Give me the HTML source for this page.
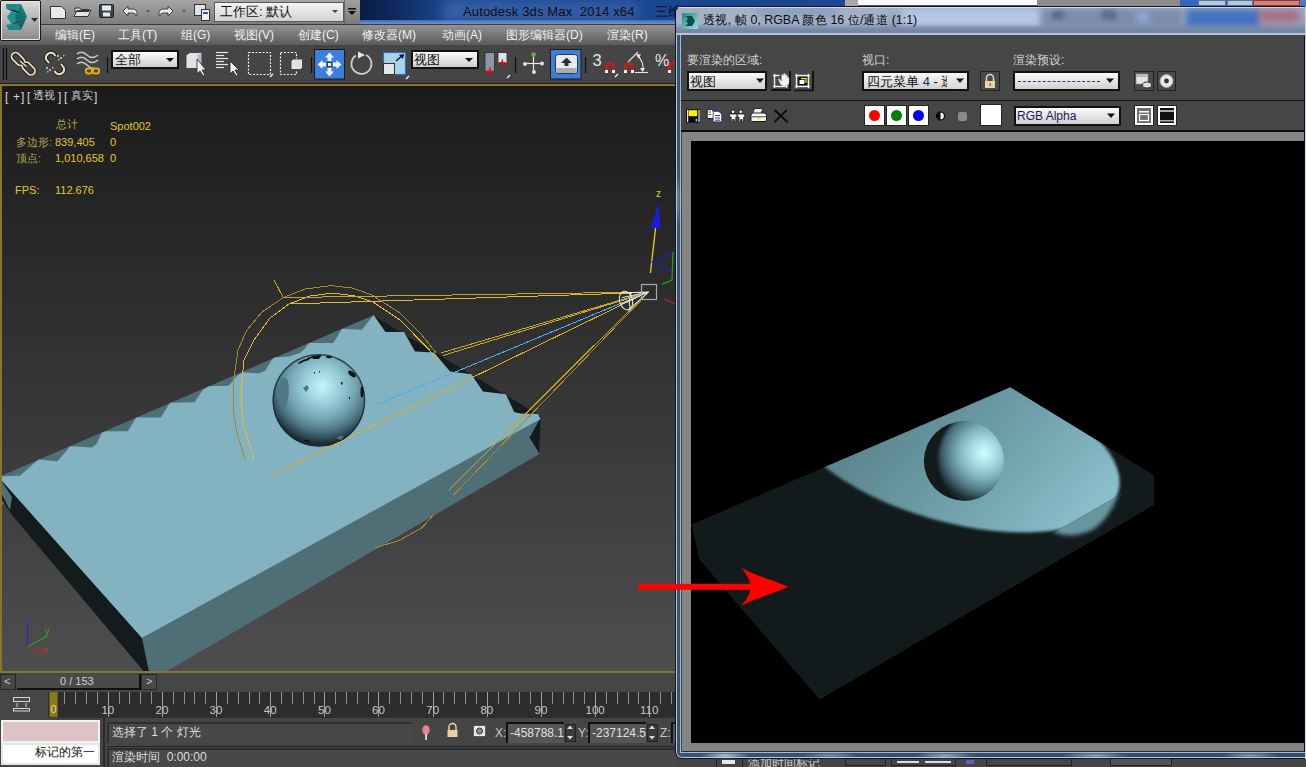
<!DOCTYPE html>
<html><head><meta charset="utf-8">
<style>
*{margin:0;padding:0;box-sizing:border-box}
html,body{width:1306px;height:767px;overflow:hidden;background:#444;font-family:"Liberation Sans",sans-serif}
.a{position:absolute}
.t{position:absolute;white-space:nowrap;line-height:1}
.c{display:inline-block;width:1em;overflow:hidden;vertical-align:top}
</style></head><body>
<!-- ===== MAIN WINDOW ===== -->
<!-- top bar -->
<div class="a" style="left:0;top:0;width:1306px;height:24px;background:linear-gradient(#a6a6a6,#7d7d7d)"></div>
<!-- title blue -->
<div class="a" style="left:360px;top:0;width:946px;height:24px;background:linear-gradient(90deg,#0a1c44 0%,#0f2a60 4%,#1f4c98 10%,#1a448e 40%,#1d4a96 60%,#2a5cb0 80%,#4a7ac0 100%)"></div>
<div class="a" style="left:360px;top:20px;width:946px;height:4px;background:linear-gradient(#3d6ab8,#6d93cc)"></div>
<!-- menu bar -->
<div class="a" style="left:0;top:24px;width:1306px;height:1px;background:#3a3a3a"></div>
<div class="a" style="left:0;top:25px;width:1306px;height:20px;background:linear-gradient(#939393,#5b5b5b)"></div>
<!-- toolbar -->
<div class="a" style="left:0;top:45px;width:1306px;height:38px;background:#454545"></div>
<div class="a" style="left:0;top:83px;width:1306px;height:1px;background:#1e1e1e"></div>

<!-- logo button -->
<div class="a" style="left:0;top:0;width:41px;height:41px;border:1px solid #1a1a1a;border-radius:2px;background:linear-gradient(#dadada,#8a8a8a);box-shadow:inset 0 0 0 1px #e8e8e8"></div>
<svg class="a" style="left:0;top:0" width="41" height="41">
<polygon points="6,4 21,4 17,10.5 6,8.5" fill="#1a8b89"/>
<polygon points="21,4 27,16.5 17,10.5" fill="#147a78"/>
<polygon points="6,8.5 17,10.5 27,16.5 11.5,11" fill="#0b3f3e"/>
<polygon points="11.5,11 27,16.5 11.5,24 7,17" fill="#1b9391"/>
<polygon points="15.5,13 27,16.5 15.5,21.5" fill="#10706e"/>
<polygon points="11.5,24 27,16.5 17,23.5 6,25" fill="#0b3f3e"/>
<polygon points="27,16.5 21,30 17,23.5" fill="#0f6765"/>
<polygon points="6,25 17,23.5 21,30 8.5,30" fill="#198785"/>
<polygon points="31,18 38,18 34.5,22" fill="#2b2f3a"/>
</svg>
<!-- quick access icons -->
<svg class="a" style="left:42px;top:0" width="170" height="24">
<path d="M8.5,6.5 h11 l4,4 v8 h-15 z" fill="#e8eaee" stroke="#333" stroke-width="1"/>
<path d="M33,8 h5 l1,1.5 h8 v2 h-14z M32,16.5 l3,-6 h14 l-3,6z" fill="#dfe3ea" stroke="#333" stroke-width="1"/>
<rect x="57.5" y="4.5" width="14" height="13" rx="1" fill="#3a4450" stroke="#222"/>
<rect x="60" y="5.5" width="9" height="5" fill="#e8e8e8"/><rect x="61" y="12.5" width="7" height="4" fill="#e8e8e8"/>
<path d="M81,11 l5,-5 v3 h4 c4,0 5,2 5,4 c0,2 -1,3 -1,3 c0,-2 -1,-3 -4,-3 h-4 v3z" fill="#e8e8e8" stroke="#333" stroke-width="0.9"/>
<polygon points="104,10 108,10 106,12.5" fill="#555"/>
<path d="M131,11 l-5,-5 v3 h-4 c-4,0 -5,2 -5,4 c0,2 1,3 1,3 c0,-2 1,-3 4,-3 h4 v3z" fill="#e8e8e8" stroke="#333" stroke-width="0.9"/>
<polygon points="140,10 144,10 142,12.5" fill="#555"/>
<rect x="152.5" y="4.5" width="11" height="11" fill="#e0e4ea" stroke="#333"/>
<rect x="159.5" y="9.5" width="8" height="11" fill="#f0f0f0" stroke="#333"/>
<rect x="161" y="12" width="5" height="2" fill="#2a5cc0"/>
</svg>
<!-- workspace dropdown -->
<div class="a" style="left:214px;top:2px;width:130px;height:20px;border:1px solid #5a5a5a;background:linear-gradient(#f4f4f4,#d2d2d2)"></div>
<div class="t" style="left:220px;top:5px;font-size:13px;color:#111"><span class="c">工</span><span class="c">作</span><span class="c">区</span>: <span class="c">默</span><span class="c">认</span></div>
<svg class="a" style="left:330px;top:9px" width="10" height="6"><polygon points="2,1 8,1 5,4" fill="#444"/></svg>
<div class="a" style="left:344px;top:0px;width:16px;height:24px;background:linear-gradient(#a0a0a0,#7a7a7a);border-left:1px solid #666"></div>
<svg class="a" style="left:345px;top:5px" width="14" height="14"><rect x="3" y="3" width="8" height="1.5" fill="#111"/><polygon points="3,6 11,6 7,10" fill="#111"/></svg>
<!-- title -->
<div class="a" style="left:440px;top:1px;width:200px;height:20px;border-radius:10px;background:rgba(150,180,230,0.18);filter:blur(4px)"></div>
<div class="t" style="left:463px;top:5px;font-size:13px;color:#0d0d14;letter-spacing:0.15px">Autodesk 3ds Max&nbsp; 2014 x64</div>
<div class="t" style="left:655px;top:5px;font-size:13px;color:#0d0d14"><span class="c">三</span><span class="c">维</span></div>
<!-- top strip right (behind render window) -->
<div class="a" style="left:845px;top:0;width:13px;height:6px;background:#a9a9a9"></div>
<div class="a" style="left:858px;top:0;width:179px;height:6px;background:#f8f8f8;border-bottom:1px solid #555"></div>
<div class="a" style="left:1037px;top:0;width:143px;height:6px;background:#8c8c8c"></div>
<div class="a" style="left:1198px;top:0;width:28px;height:6px;background:#b7c8e0;border:1px solid #5870a0"></div>
<div class="a" style="left:1227px;top:0;width:26px;height:6px;background:#b7c8e0;border:1px solid #5870a0"></div>
<div class="a" style="left:1253px;top:0;width:47px;height:6px;background:#d88080;border:1px solid #804040"></div>
<!-- menu -->
<div class="t" style="left:55px;top:29px;font-size:12px;color:#f0f0f0"><span class="c">编</span><span class="c">辑</span>(E)</div>
<div class="t" style="left:118px;top:29px;font-size:12px;color:#f0f0f0"><span class="c">工</span><span class="c">具</span>(T)</div>
<div class="t" style="left:181px;top:29px;font-size:12px;color:#f0f0f0"><span class="c">组</span>(G)</div>
<div class="t" style="left:234px;top:29px;font-size:12px;color:#f0f0f0"><span class="c">视</span><span class="c">图</span>(V)</div>
<div class="t" style="left:298px;top:29px;font-size:12px;color:#f0f0f0"><span class="c">创</span><span class="c">建</span>(C)</div>
<div class="t" style="left:362px;top:29px;font-size:12px;color:#f0f0f0"><span class="c">修</span><span class="c">改</span><span class="c">器</span>(M)</div>
<div class="t" style="left:442px;top:29px;font-size:12px;color:#f0f0f0"><span class="c">动</span><span class="c">画</span>(A)</div>
<div class="t" style="left:506px;top:29px;font-size:12px;color:#f0f0f0"><span class="c">图</span><span class="c">形</span><span class="c">编</span><span class="c">辑</span><span class="c">器</span>(D)</div>
<div class="t" style="left:607px;top:29px;font-size:12px;color:#f0f0f0"><span class="c">渲</span><span class="c">染</span>(R)</div>


<!-- toolbar icons -->
<svg class="a" style="left:0;top:45px" width="675" height="38" viewBox="0 45 675 38">
<line x1="3.5" y1="48" x2="3.5" y2="80" stroke="#0a0a0a" stroke-width="1.2"/>
<line x1="6.5" y1="48" x2="6.5" y2="80" stroke="#0a0a0a" stroke-width="1.2"/>
<!-- link -->
<g fill="none" stroke="#1c2230" stroke-width="3.6"><rect x="14" y="51.5" width="8" height="15" rx="4" transform="rotate(-45 18 59)"/><rect x="24.6" y="61" width="8" height="15" rx="4" transform="rotate(-45 28.6 68.5)"/></g>
<g fill="none" stroke="#f2deb0" stroke-width="1.8"><rect x="14" y="51.5" width="8" height="15" rx="4" transform="rotate(-45 18 59)"/><rect x="24.6" y="61" width="8" height="15" rx="4" transform="rotate(-45 28.6 68.5)"/></g>
<line x1="20" y1="61" x2="26.5" y2="66.5" stroke="#1c2230" stroke-width="3.4"/><line x1="20" y1="61" x2="26.5" y2="66.5" stroke="#f2deb0" stroke-width="1.6"/>
<!-- unlink -->
<g fill="none" stroke="#1c2230" stroke-width="4"><path d="M49,63 l-3,-4 a5,5 0 0 1 8,-5 l1.5,2"/><path d="M61,64 l3,4 a5,5 0 0 1 -8,5 l-1.5,-2"/></g>
<g fill="none" stroke="#f2deb0" stroke-width="2"><path d="M49,63 l-3,-4 a5,5 0 0 1 8,-5 l1.5,2"/><path d="M61,64 l3,4 a5,5 0 0 1 -8,5 l-1.5,-2"/></g>
<g fill="#b8b8b8"><rect x="57" y="55" width="2" height="2"/><rect x="60" y="57" width="2" height="2"/><rect x="63" y="55" width="1.5" height="1.5"/><rect x="58" y="59" width="1.5" height="1.5"/><rect x="46" y="67" width="2" height="2"/><rect x="49" y="69" width="2" height="2"/><rect x="52" y="67" width="1.5" height="1.5"/><rect x="47" y="71" width="1.5" height="1.5"/></g>
<!-- waves + chain -->
<g fill="none" stroke="#c8c8c8" stroke-width="1.6"><path d="M77,54 q5,-4 10,1 q5,5 11,0"/><path d="M77,59 q5,-4 10,1 q5,5 11,0"/><path d="M77,64 q5,-4 10,1 q4,4 7,3"/></g>
<g fill="none" stroke="#e0b010" stroke-width="2"><rect x="86" y="68.5" width="6" height="5" rx="2"/><rect x="93" y="68.5" width="6" height="5" rx="2"/></g>
<line x1="107.5" y1="57" x2="107.5" y2="73" stroke="#111" stroke-width="1.2"/>
<!-- select object -->
<polygon points="186,55 190,52.5 201.5,52.5 201.5,66 197.5,68.5 186,68.5" fill="#dfe2e8" stroke="#333" stroke-width="0.8"/>
<polygon points="197.5,55.5 201.5,52.5 201.5,66 197.5,68.5" fill="#b5bac2"/>
<path d="M197,59 l0,15 l3,-3 l3,5 l2,-1 l-3,-5 l4,0 z" fill="#eee" stroke="#222" stroke-width="0.8"/>
<!-- select by name -->
<g stroke="#e6e6e6" stroke-width="1.2"><line x1="216" y1="52.5" x2="228" y2="52.5"/><line x1="216" y1="55.5" x2="224" y2="55.5"/><line x1="216" y1="58.5" x2="228" y2="58.5"/><line x1="216" y1="61.5" x2="224" y2="61.5"/><line x1="216" y1="64.5" x2="228" y2="64.5"/><line x1="216" y1="67.5" x2="224" y2="67.5"/></g>
<path d="M230,61 l0,13 l3,-3 l3,5 l2,-1 l-3,-5 l4,0 z" fill="#eee" stroke="#222" stroke-width="0.8"/>
<!-- rect select -->
<rect x="248.5" y="52.5" width="22" height="22" fill="none" stroke="#f0f0f0" stroke-width="1.2" stroke-dasharray="2,1.5"/>
<line x1="270" y1="77" x2="273" y2="74" stroke="#fff" stroke-width="1.2"/>
<!-- window crossing -->
<rect x="280.5" y="52.5" width="16" height="22" fill="none" stroke="#f0f0f0" stroke-width="1.2" stroke-dasharray="2,1.5"/>
<polygon points="291,61 293,59 302.5,59 302.5,67.5 300.5,69.5 291,69.5" fill="#dfe2e8" stroke="#333" stroke-width="0.8"/>
<line x1="311.5" y1="57" x2="311.5" y2="73" stroke="#111" stroke-width="1.2"/>
<!-- move -->
<rect x="314.5" y="49.5" width="30" height="29.5" fill="#3b7fdc" stroke="#1a1a1a" stroke-width="1"/>
<g fill="#f0f0f0"><polygon points="329.5,52.5 325,57.5 327.5,57.5 327.5,61 331.5,61 331.5,57.5 334,57.5"/><polygon points="329.5,76.5 325,71.5 327.5,71.5 327.5,68 331.5,68 331.5,71.5 334,71.5"/><polygon points="317.5,64.5 322.5,60 322.5,62.5 326,62.5 326,66.5 322.5,66.5 322.5,69"/><polygon points="341.5,64.5 336.5,60 336.5,62.5 333,62.5 333,66.5 336.5,66.5 336.5,69"/></g>
<rect x="327.5" y="62.5" width="4" height="4" fill="#f0f0f0" stroke="#222" stroke-width="0.8"/>
<!-- rotate -->
<path d="M356,55.5 A10,10 0 1 0 366,55" fill="none" stroke="#d0d0d0" stroke-width="1.8"/>
<polygon points="358,51.5 365,55 358,58.5" fill="#e8e8e8"/>
<!-- scale -->
<rect x="383.5" y="52.5" width="22" height="22" fill="#a9d3ec" stroke="#2a6fc8" stroke-width="1.2"/>
<rect x="383.5" y="63.5" width="11" height="11" fill="#e4e6ea" stroke="#333" stroke-width="1"/>
<line x1="396" y1="61" x2="403" y2="55" stroke="#111" stroke-width="1.4"/><polygon points="404,54 399,55 403,59" fill="#111"/>
<line x1="406" y1="79" x2="409" y2="76" stroke="#fff" stroke-width="1.2"/>
<!-- pivot -->
<rect x="485" y="52.5" width="9.5" height="19" fill="#8c96a4" stroke="#2a2a2a" stroke-width="0.8"/>
<rect x="498" y="52.5" width="9" height="11" fill="#e0e2e6" stroke="#2a2a2a" stroke-width="0.8"/>
<g fill="#e01010"><rect x="489" y="67.5" width="1.6" height="8"/><rect x="486" y="70.5" width="8" height="1.6"/><rect x="501.5" y="59.5" width="1.6" height="7"/><rect x="499" y="62" width="7" height="1.6"/></g>
<line x1="507" y1="78" x2="510" y2="75" stroke="#fff" stroke-width="1.2"/>
<line x1="515.5" y1="57" x2="515.5" y2="73" stroke="#111" stroke-width="1.2"/>
<!-- manipulate -->
<g stroke="#e8e8e8" stroke-width="1.2"><line x1="525" y1="63.5" x2="542" y2="63.5"/><line x1="533.5" y1="55" x2="533.5" y2="72"/></g>
<circle cx="533.5" cy="54.5" r="2.3" fill="#5ab040"/><circle cx="525" cy="64" r="2" fill="#ddd"/><circle cx="542" cy="63.5" r="2" fill="#ddd"/><circle cx="534" cy="72" r="2" fill="#ddd"/>
<!-- keyboard override -->
<rect x="550.5" y="49.5" width="30.5" height="29.5" fill="#3b7fdc" stroke="#1a1a1a" stroke-width="1"/>
<rect x="555.5" y="54.5" width="22" height="19" rx="3" fill="#e8eaee" stroke="#333" stroke-width="1"/>
<rect x="556" y="68" width="21" height="5" rx="2" fill="#a8aeb8"/>
<polygon points="566.5,57.5 561,63 564.5,63 564.5,66 568.5,66 568.5,63 572,63" fill="#2a3038"/>
<line x1="585.5" y1="57" x2="585.5" y2="73" stroke="#111" stroke-width="1.2"/>
<!-- snaps -->
<text x="592.5" y="65.5" font-family="Liberation Sans" font-size="16.5" fill="#e6e6e6">3</text>
<g fill="none" stroke="#d01818" stroke-width="2.6"><path d="M606.5,72 v-5 a3.5,3.5 0 0 1 7,0 v5"/><path d="M625.5,72 v-5 a3.5,3.5 0 0 1 7,0 v5"/><path d="M669.5,72 v-5 a3.5,3.5 0 0 1 7,0 v5"/></g>
<g fill="#f0f0f0"><rect x="605" y="70" width="3" height="3"/><rect x="612" y="70" width="3" height="3"/><rect x="624" y="70" width="3" height="3"/><rect x="631" y="70" width="3" height="3"/><rect x="668" y="70" width="3" height="3"/></g>
<line x1="615" y1="77" x2="618" y2="74" stroke="#fff" stroke-width="1.2"/>
<g fill="none" stroke="#e6e6e6" stroke-width="1.1"><line x1="628" y1="62" x2="638" y2="52"/><path d="M637.5,55.5 q6.5,6 5.5,15.5"/><line x1="635" y1="72.5" x2="648" y2="72.5"/></g><g fill="#e6e6e6"><polygon points="636,54 641,54.5 638.5,58.5"/><polygon points="640,68 645,68 642.5,72"/></g>
<text x="655" y="65.5" font-family="Liberation Sans" font-size="16" fill="#e6e6e6">%</text>
</svg>
<!-- toolbar dropdowns -->
<div class="a" style="left:111px;top:50px;width:68px;height:19px;border:2px solid #111;background:linear-gradient(#fafafa,#cfcfcf)"></div>
<div class="t" style="left:115px;top:53px;font-size:13px;color:#111"><span class="c">全</span><span class="c">部</span></div>
<svg class="a" style="left:165px;top:57px" width="10" height="6"><polygon points="1,1 9,1 5,5" fill="#111"/></svg>
<div class="a" style="left:411px;top:50px;width:68px;height:19px;border:2px solid #111;background:linear-gradient(#fafafa,#cfcfcf)"></div>
<div class="t" style="left:414px;top:53px;font-size:13px;color:#111"><span class="c">视</span><span class="c">图</span></div>
<svg class="a" style="left:464px;top:57px" width="10" height="6"><polygon points="1,1 9,1 5,5" fill="#111"/></svg>

<!-- viewport -->
<div class="a" style="left:0;top:84px;width:680px;height:589px;background:#8a7530"></div>
<div class="a" style="left:2px;top:86px;width:676px;height:585px;background:linear-gradient(#1b1b1b,#4e4e4e)"></div>

<!-- viewport scene -->
<svg class="a" style="left:0;top:0" width="675" height="767" viewBox="0 0 675 767">
<defs>
<clipPath id="vpc"><rect x="2" y="86" width="673" height="585"/></clipPath>
<radialGradient id="sph" cx="322" cy="386" r="58" gradientUnits="userSpaceOnUse">
<stop offset="0" stop-color="#c4f6fc"/><stop offset="0.3" stop-color="#9ad0dc"/><stop offset="0.58" stop-color="#72a4b1"/><stop offset="0.78" stop-color="#4d7582"/><stop offset="0.92" stop-color="#2c4650"/><stop offset="1" stop-color="#1a2a30"/>
</radialGradient>
</defs>
<g clip-path="url(#vpc)">
<!-- teal band under back line -->
<polygon fill="#4f6f78" points="2,475.5 374,315 374,345 2,505"/>
<!-- dark back wall -->
<polygon fill="#141c1f" points="374,316 540.5,416 540.5,430 374,340"/>
<!-- left side face -->
<polygon fill="#141b1d" points="2,478 142,638 149,671 143.5,671 11.7,514.7 2,500"/>
<polygon fill="#4f6f78" points="2,482 12,497 10,510 2,495"/>
<!-- front face -->
<polygon fill="#4f6e76" points="142,638 540.5,418 539.5,454 167,671 149,671"/>
<polygon fill="#141b1d" points="540.5,418 529.5,437.5 539.5,454"/>
<!-- top face -->
<polygon fill="#83b2c1" points="2,481 2,476.2 19.9,475.7 33.7,463.5 39,459.6 57.4,461.2 67.4,449.7 69.7,446.2 91.9,447.4 96.5,444.3 101.8,432.8 106.4,431.3 127.9,431.3 136.3,417.5 160.8,417.5 170,402.7 194.5,402.2 202.9,389.8 208.8,386.3 228.7,385.7 237,375.7 242.8,372.2 258,373.4 265,371 272.2,359.3 274.5,357.5 288.6,356.4 300,353 304.7,348.7 309,343 333.4,343 342,328.7 361.9,329.7 373.6,315 385.4,332 404,332 415,351.6 434,352.4 450,371.4 471.5,374.2 476.5,381.9 483,391.5 505.8,394.2 512.1,407.5 514,412 520.4,413.4 538.2,413.9 540.5,419 142,638"/>
<!-- sphere -->
<circle cx="318.9" cy="400.3" r="46.3" fill="url(#sph)"/>
<circle cx="318.9" cy="400.3" r="45.6" fill="none" stroke="#18282e" stroke-width="1.4" opacity="0.8"/>
<g fill="#0a1214">
<path d="M298,363 q5,-4 12,-5 l-1,2 q-5,1 -10,4z"/><path d="M307,358 q7,-3 14,-3 l0,2 q-7,0 -13,2z"/><ellipse cx="316" cy="357.5" rx="4" ry="1.5"/><ellipse cx="329" cy="357" rx="3" ry="1.2"/>
<ellipse cx="352" cy="374" rx="4.5" ry="2.2" transform="rotate(38 352 374)"/><ellipse cx="362" cy="392" rx="1.5" ry="5.5"/>
<rect x="314" y="372" width="1" height="1.5"/><rect x="319" y="371" width="1" height="1.5"/><rect x="341" y="382" width="1.5" height="2.5"/><rect x="304" y="440" width="5" height="1.5"/><rect x="349" y="397" width="1" height="2"/>
</g>
<g fill="#4f7782"><path d="M281,379 q5,-3 7,2 q2,12 -1,22 q-2,4 -3,8 q-3,-6 -4,-14 q-1,-10 1,-18z"/><path d="M303,388 l4,-3 l2,3 l-3,4z"/><path d="M336,438 q4,-3 8,-2 l-3,4z"/><path d="M276,388 q2,-2 3,1 l0,8 q-2,2 -3,-1z"/></g>
<!-- wireframe -->
<g fill="none" stroke="#c8a52a" stroke-width="1" shape-rendering="crispEdges">
<polyline stroke="#a48a2e" points="245.3,459.8 236.4,431.6 233.5,410 233,385 238,350 246.5,330.7 262,312 283.3,297.6 305,289 331,285.6 352,288 371.5,294.8 400,313 421,334 436,352.7"/>
<polyline stroke="#e0bb30" points="254,459.8 242.3,420 241,390 244,360 254,339.9 270,318 288.8,304 310,296 333,293 355,296 373.4,302.2 400,320 423,343.5 441,362"/>
<line x1="274" y1="280" x2="283.3" y2="297.6"/>
<line x1="283.3" y1="297.6" x2="648" y2="292"/>
<line x1="288.8" y1="304" x2="648" y2="292.5" stroke="#e0bb30"/>
<line x1="441" y1="353" x2="648" y2="292"/>
<line x1="443" y1="355.5" x2="648" y2="292.5"/>
<line x1="270.4" y1="475.7" x2="648" y2="292" stroke="#d9b02a"/>
<line x1="449" y1="490" x2="648" y2="292"/>
<line x1="453.6" y1="495" x2="648" y2="293" stroke="#a88a2a"/>
<polyline points="375,548 400,540 421.8,527.9 432.5,516" stroke="#a88a2a"/>
</g>
<line x1="375" y1="405.3" x2="648" y2="292" stroke="#4aaef0" stroke-width="1" shape-rendering="crispEdges"/>
<!-- spot light cone -->
<g fill="none" stroke="#e8e8e8" stroke-width="1">
<ellipse cx="626" cy="300.5" rx="6.5" ry="9.5" transform="rotate(-15 626 300.5)"/>
<line x1="620.5" y1="293" x2="648.5" y2="292"/><line x1="627.7" y1="310.4" x2="648.5" y2="292"/><line x1="621.3" y1="304" x2="648.5" y2="292"/><line x1="622" y1="297.6" x2="648.5" y2="292"/>
<path d="M631,292.5 q-3,8 -1,17"/>
</g>
<rect x="641.5" y="284.5" width="15" height="15" fill="none" stroke="#a8a8a8" stroke-width="1.2"/>
<!-- gizmo -->
<line x1="655.6" y1="228" x2="650.4" y2="273" stroke="#e6d020" stroke-width="1.3"/>
<polygon points="658.2,203 651,228 660.5,228" fill="#1a1ae6"/>
<text x="656" y="197" font-family="Liberation Sans" font-size="10" fill="#e6d020">z</text>
<polyline points="673,252.5 652,262 673,272.3" fill="none" stroke="#2020c0" stroke-width="1.2"/>
<polyline points="673,252 672,280 662,284.4" fill="none" stroke="#20a020" stroke-width="1.2"/>
<line x1="664" y1="299" x2="675" y2="304" stroke="#c02020" stroke-width="1.2"/>
<!-- axis tripod -->
<line x1="27.5" y1="624" x2="27.5" y2="647" stroke="#2828c8" stroke-width="1.2"/>
<line x1="27.5" y1="647" x2="47" y2="636" stroke="#28a028" stroke-width="1.2"/>
<line x1="27.5" y1="647" x2="45" y2="654.5" stroke="#c02828" stroke-width="1.2"/>
<text x="25.5" y="622" font-family="Liberation Sans" font-size="9" fill="#3a3ad8">z</text>
<text x="45" y="634" font-family="Liberation Sans" font-size="9" fill="#30b030">y</text>
<text x="43" y="653" font-family="Liberation Sans" font-size="9" fill="#d03030">x</text>
</g>
</svg>


<!-- viewport texts -->
<div class="t" style="left:5px;top:91px;font-size:12px;color:#d6d6d6">[</div><div class="t" style="left:13px;top:91px;font-size:12px;color:#d6d6d6">+</div><div class="t" style="left:21px;top:91px;font-size:12px;color:#d6d6d6">]</div>
<div class="t" style="left:27px;top:91px;font-size:12px;color:#d6d6d6">[</div><div class="t" style="left:33px;top:90px;font-size:11px;color:#c8c8c8"><span class="c">透</span><span class="c">视</span></div><div class="t" style="left:58px;top:91px;font-size:12px;color:#d6d6d6">]</div>
<div class="t" style="left:64px;top:91px;font-size:12px;color:#d6d6d6">[</div><div class="t" style="left:71px;top:90px;font-size:11px;color:#c8c8c8"><span class="c">真</span><span class="c">实</span></div><div class="t" style="left:94px;top:91px;font-size:12px;color:#d6d6d6">]</div>
<div class="t" style="left:56px;top:119px;font-size:11px;color:#b4a44a"><span class="c">总</span><span class="c">计</span></div>
<div class="t" style="left:110px;top:121px;font-size:11px;color:#e4c62a">Spot002</div>
<div class="t" style="left:16px;top:137px;font-size:11px;color:#b4a44a"><span class="c">多</span><span class="c">边</span><span class="c">形</span>:</div>
<div class="t" style="left:55px;top:137px;font-size:11px;color:#e4c62a">839,405</div>
<div class="t" style="left:110px;top:137px;font-size:11px;color:#e4c62a">0</div>
<div class="t" style="left:16px;top:153px;font-size:11px;color:#b4a44a"><span class="c">顶</span><span class="c">点</span>:</div>
<div class="t" style="left:55px;top:153px;font-size:11px;color:#e4c62a">1,010,658</div>
<div class="t" style="left:110px;top:153px;font-size:11px;color:#e4c62a">0</div>
<div class="t" style="left:15px;top:185px;font-size:11px;color:#e4c62a">FPS:</div>
<div class="t" style="left:55px;top:185px;font-size:11px;color:#e4c62a">112.676</div>

<!-- time slider / track / status -->
<div class="a" style="left:0;top:673px;width:1306px;height:94px;background:#454545"></div>
<div class="a" style="left:0;top:673px;width:675px;height:19px;background:#464646"></div>
<div class="a" style="left:0;top:674px;width:16px;height:16px;border:1px solid #2a2a2a;border-right-color:#222;background:#484848"></div>
<div class="t" style="left:4px;top:676px;font-size:11px;color:#c8c8c8">&lt;</div>
<div class="a" style="left:17px;top:674px;width:124px;height:16px;background:#4a4a4a;border-bottom:2px solid #111;border-right:2px solid #111"></div>
<div class="t" style="left:60px;top:676px;font-size:11px;color:#d0d0d0">0 / 153</div>
<div class="a" style="left:141px;top:674px;width:16px;height:16px;border:1px solid #2a2a2a;background:#484848"></div>
<div class="t" style="left:146px;top:676px;font-size:11px;color:#c8c8c8">&gt;</div>
<div class="a" style="left:0;top:692px;width:48px;height:26px;background:#474747"></div>
<div class="a" style="left:48px;top:692px;width:627px;height:26px;background:#2d2d2d"></div>
<!-- status bar -->
<div class="a" style="left:0;top:718px;width:675px;height:49px;background:#454545"></div>
<div class="a" style="left:1px;top:720px;width:99px;height:23px;background:#dcc4c4;border:2px solid #f2f2f2"></div>
<div class="a" style="left:1px;top:743px;width:99px;height:22px;background:#fff;border:2px solid #e6e6e6"></div>
<div class="t" style="left:35px;top:746px;font-size:12px;color:#111"><span class="c">标</span><span class="c">记</span><span class="c">的</span><span class="c">第</span><span class="c">一</span></div>
<div class="a" style="left:103px;top:718px;width:2px;height:49px;background:#2a2a2a"></div>
<div class="a" style="left:107px;top:722px;width:305px;height:21px;background:#484848;border-top:2px solid #2e2e2e;border-left:2px solid #2e2e2e"></div>
<div class="t" style="left:112px;top:726px;font-size:12px;color:#dedede"><span class="c">选</span><span class="c">择</span><span class="c">了</span> 1 <span class="c">个</span> <span class="c">灯</span><span class="c">光</span></div>
<div class="a" style="left:107px;top:746px;width:568px;height:1px;background:#262626"></div>
<div class="a" style="left:107px;top:748px;width:568px;height:19px;background:#484848;border-top:2px solid #2e2e2e;border-left:2px solid #2e2e2e"></div>
<div class="t" style="left:112px;top:751px;font-size:12px;color:#dedede"><span class="c">渲</span><span class="c">染</span><span class="c">时</span><span class="c">间</span>&nbsp; 0:00:00</div>
<div class="t" style="left:495px;top:727px;font-size:12px;color:#c8c8c8">X:</div>
<div class="a" style="left:506px;top:722px;width:58px;height:21px;background:#555;border-top:2px solid #111;border-left:2px solid #111;overflow:hidden"><div class="t" style="left:2px;top:3px;font-size:12px;color:#e0e0e0">-458788.1</div></div>
<div class="a" style="left:565px;top:724px;width:11px;height:18px;background:#3a3a3a;border:1px solid #222"></div>
<div class="t" style="left:578px;top:727px;font-size:12px;color:#c8c8c8">Y:</div>
<div class="a" style="left:588px;top:722px;width:58px;height:21px;background:#555;border-top:2px solid #111;border-left:2px solid #111;overflow:hidden"><div class="t" style="left:2px;top:3px;font-size:12px;color:#e0e0e0">-237124.5</div></div>
<div class="a" style="left:647px;top:724px;width:11px;height:18px;background:#3a3a3a;border:1px solid #222"></div>
<div class="t" style="left:660px;top:727px;font-size:12px;color:#c8c8c8">Z:</div>
<div class="a" style="left:671px;top:722px;width:10px;height:21px;background:#555;border-top:2px solid #111;border-left:2px solid #111"></div>
<svg class="a" style="left:0;top:0" width="675" height="767" viewBox="0 0 675 767">
<line x1="54.5" y1="692" x2="54.5" y2="717" stroke="#a0a0a0" stroke-width="1"/>
<line x1="64.5" y1="692" x2="64.5" y2="704" stroke="#909090" stroke-width="1"/>
<line x1="75.5" y1="692" x2="75.5" y2="704" stroke="#909090" stroke-width="1"/>
<line x1="86.5" y1="692" x2="86.5" y2="704" stroke="#909090" stroke-width="1"/>
<line x1="97.5" y1="692" x2="97.5" y2="704" stroke="#909090" stroke-width="1"/>
<line x1="108.5" y1="692" x2="108.5" y2="717" stroke="#a0a0a0" stroke-width="1"/>
<text x="107.8" y="713.5" text-anchor="middle" font-family="Liberation Sans" font-size="11.5" fill="#c8c8c8">10</text>
<line x1="119.5" y1="692" x2="119.5" y2="704" stroke="#909090" stroke-width="1"/>
<line x1="129.5" y1="692" x2="129.5" y2="704" stroke="#909090" stroke-width="1"/>
<line x1="140.5" y1="692" x2="140.5" y2="704" stroke="#909090" stroke-width="1"/>
<line x1="151.5" y1="692" x2="151.5" y2="704" stroke="#909090" stroke-width="1"/>
<line x1="162.5" y1="692" x2="162.5" y2="717" stroke="#a0a0a0" stroke-width="1"/>
<text x="161.9" y="713.5" text-anchor="middle" font-family="Liberation Sans" font-size="11.5" fill="#c8c8c8">20</text>
<line x1="173.5" y1="692" x2="173.5" y2="704" stroke="#909090" stroke-width="1"/>
<line x1="184.5" y1="692" x2="184.5" y2="704" stroke="#909090" stroke-width="1"/>
<line x1="194.5" y1="692" x2="194.5" y2="704" stroke="#909090" stroke-width="1"/>
<line x1="205.5" y1="692" x2="205.5" y2="704" stroke="#909090" stroke-width="1"/>
<line x1="216.5" y1="692" x2="216.5" y2="717" stroke="#a0a0a0" stroke-width="1"/>
<text x="216.0" y="713.5" text-anchor="middle" font-family="Liberation Sans" font-size="11.5" fill="#c8c8c8">30</text>
<line x1="227.5" y1="692" x2="227.5" y2="704" stroke="#909090" stroke-width="1"/>
<line x1="238.5" y1="692" x2="238.5" y2="704" stroke="#909090" stroke-width="1"/>
<line x1="249.5" y1="692" x2="249.5" y2="704" stroke="#909090" stroke-width="1"/>
<line x1="259.5" y1="692" x2="259.5" y2="704" stroke="#909090" stroke-width="1"/>
<line x1="270.5" y1="692" x2="270.5" y2="717" stroke="#a0a0a0" stroke-width="1"/>
<text x="270.2" y="713.5" text-anchor="middle" font-family="Liberation Sans" font-size="11.5" fill="#c8c8c8">40</text>
<line x1="281.5" y1="692" x2="281.5" y2="704" stroke="#909090" stroke-width="1"/>
<line x1="292.5" y1="692" x2="292.5" y2="704" stroke="#909090" stroke-width="1"/>
<line x1="303.5" y1="692" x2="303.5" y2="704" stroke="#909090" stroke-width="1"/>
<line x1="314.5" y1="692" x2="314.5" y2="704" stroke="#909090" stroke-width="1"/>
<line x1="324.5" y1="692" x2="324.5" y2="717" stroke="#a0a0a0" stroke-width="1"/>
<text x="324.4" y="713.5" text-anchor="middle" font-family="Liberation Sans" font-size="11.5" fill="#c8c8c8">50</text>
<line x1="335.5" y1="692" x2="335.5" y2="704" stroke="#909090" stroke-width="1"/>
<line x1="346.5" y1="692" x2="346.5" y2="704" stroke="#909090" stroke-width="1"/>
<line x1="357.5" y1="692" x2="357.5" y2="704" stroke="#909090" stroke-width="1"/>
<line x1="368.5" y1="692" x2="368.5" y2="704" stroke="#909090" stroke-width="1"/>
<line x1="378.5" y1="692" x2="378.5" y2="717" stroke="#a0a0a0" stroke-width="1"/>
<text x="378.5" y="713.5" text-anchor="middle" font-family="Liberation Sans" font-size="11.5" fill="#c8c8c8">60</text>
<line x1="389.5" y1="692" x2="389.5" y2="704" stroke="#909090" stroke-width="1"/>
<line x1="400.5" y1="692" x2="400.5" y2="704" stroke="#909090" stroke-width="1"/>
<line x1="411.5" y1="692" x2="411.5" y2="704" stroke="#909090" stroke-width="1"/>
<line x1="422.5" y1="692" x2="422.5" y2="704" stroke="#909090" stroke-width="1"/>
<line x1="433.5" y1="692" x2="433.5" y2="717" stroke="#a0a0a0" stroke-width="1"/>
<text x="432.7" y="713.5" text-anchor="middle" font-family="Liberation Sans" font-size="11.5" fill="#c8c8c8">70</text>
<line x1="443.5" y1="692" x2="443.5" y2="704" stroke="#909090" stroke-width="1"/>
<line x1="454.5" y1="692" x2="454.5" y2="704" stroke="#909090" stroke-width="1"/>
<line x1="465.5" y1="692" x2="465.5" y2="704" stroke="#909090" stroke-width="1"/>
<line x1="476.5" y1="692" x2="476.5" y2="704" stroke="#909090" stroke-width="1"/>
<line x1="487.5" y1="692" x2="487.5" y2="717" stroke="#a0a0a0" stroke-width="1"/>
<text x="486.8" y="713.5" text-anchor="middle" font-family="Liberation Sans" font-size="11.5" fill="#c8c8c8">80</text>
<line x1="498.5" y1="692" x2="498.5" y2="704" stroke="#909090" stroke-width="1"/>
<line x1="508.5" y1="692" x2="508.5" y2="704" stroke="#909090" stroke-width="1"/>
<line x1="519.5" y1="692" x2="519.5" y2="704" stroke="#909090" stroke-width="1"/>
<line x1="530.5" y1="692" x2="530.5" y2="704" stroke="#909090" stroke-width="1"/>
<line x1="541.5" y1="692" x2="541.5" y2="717" stroke="#a0a0a0" stroke-width="1"/>
<text x="541.0" y="713.5" text-anchor="middle" font-family="Liberation Sans" font-size="11.5" fill="#c8c8c8">90</text>
<line x1="552.5" y1="692" x2="552.5" y2="704" stroke="#909090" stroke-width="1"/>
<line x1="563.5" y1="692" x2="563.5" y2="704" stroke="#909090" stroke-width="1"/>
<line x1="573.5" y1="692" x2="573.5" y2="704" stroke="#909090" stroke-width="1"/>
<line x1="584.5" y1="692" x2="584.5" y2="704" stroke="#909090" stroke-width="1"/>
<line x1="595.5" y1="692" x2="595.5" y2="717" stroke="#a0a0a0" stroke-width="1"/>
<text x="595.1" y="713.5" text-anchor="middle" font-family="Liberation Sans" font-size="11.5" fill="#c8c8c8">100</text>
<line x1="606.5" y1="692" x2="606.5" y2="704" stroke="#909090" stroke-width="1"/>
<line x1="617.5" y1="692" x2="617.5" y2="704" stroke="#909090" stroke-width="1"/>
<line x1="628.5" y1="692" x2="628.5" y2="704" stroke="#909090" stroke-width="1"/>
<line x1="638.5" y1="692" x2="638.5" y2="704" stroke="#909090" stroke-width="1"/>
<line x1="649.5" y1="692" x2="649.5" y2="717" stroke="#a0a0a0" stroke-width="1"/>
<text x="649.2" y="713.5" text-anchor="middle" font-family="Liberation Sans" font-size="11.5" fill="#c8c8c8">110</text>
<line x1="660.5" y1="692" x2="660.5" y2="704" stroke="#909090" stroke-width="1"/>
<line x1="671.5" y1="692" x2="671.5" y2="704" stroke="#909090" stroke-width="1"/>
<rect x="49.5" y="692" width="8" height="25" fill="#8a7a1c" stroke="#6a5c10" stroke-width="0.8"/>
<text x="53.5" y="713" text-anchor="middle" font-family="Liberation Sans" font-size="11" fill="#e8d890">0</text>
<g fill="none" stroke="#d8d8d8" stroke-width="1"><rect x="13.5" y="697.5" width="16" height="4"/><rect x="13.5" y="708.5" width="16" height="2.5"/><line x1="17" y1="707" x2="17" y2="703"/><line x1="26" y1="703" x2="26" y2="707"/></g>
<!-- status icons -->
<ellipse cx="426" cy="730" rx="4" ry="5" fill="#e08890" stroke="#7a3a40" stroke-width="0.8"/><rect x="425.3" y="734" width="1.6" height="6" fill="#eee"/>
<path d="M449,730 v-3 a3.5,3.5 0 0 1 7,0 v3" fill="none" stroke="#e8d8b8" stroke-width="1.4"/><rect x="447.5" y="730" width="10" height="7" fill="#e8d0a0"/>
<rect x="473.5" y="725.5" width="12" height="11" fill="#e8e8e8" stroke="#333" stroke-width="0.6"/><circle cx="479.5" cy="731" r="3" fill="#888" stroke="#333"/>
<g fill="#d8d8d8"><polygon points="567,729 570,725.5 573,729"/><polygon points="567,736 570,739.5 573,736"/><polygon points="649,729 652,725.5 655,729"/><polygon points="649,736 652,739.5 655,736"/></g>
</svg>



<!-- ===== RENDER WINDOW ===== -->
<!-- bottom strip details (under window) -->
<div class="a" style="left:716px;top:759px;width:1px;height:8px;background:#222"></div>
<div class="a" style="left:722px;top:760px;width:13px;height:4px;background:#e8e8e8"></div>
<div class="a" style="left:742px;top:759px;width:1px;height:8px;background:#222"></div>
<div class="t" style="left:748px;top:757px;font-size:12px;color:#cfcfcf"><span class="c">添</span><span class="c">加</span><span class="c">时</span><span class="c">间</span><span class="c">标</span><span class="c">记</span></div>
<div class="a" style="left:845px;top:757px;width:41px;height:9px;border:1px solid #222;background:#454545"></div>
<div class="a" style="left:891px;top:757px;width:65px;height:9px;border:1px solid #222;background:#454545"></div>
<div class="a" style="left:897px;top:761px;width:22px;height:2px;background:#ddd"></div><div class="a" style="left:925px;top:761px;width:26px;height:2px;background:#ddd"></div>
<div class="a" style="left:966px;top:760px;width:8px;height:4px;background:#6a5ab8"></div>
<div class="a" style="left:986px;top:757px;width:86px;height:9px;border:1px solid #222;background:#454545"></div>
<div class="a" style="left:1110px;top:757px;width:62px;height:9px;border:1px solid #222;background:#555"></div>
<!-- frame -->
<div class="a" style="left:675px;top:6px;width:640px;height:753px;border-radius:7px;background:linear-gradient(90deg,#3a5274,#34496a);border:1px solid #0e1620;box-shadow:inset 0 0 0 1px #b8c8dc"></div>
<!-- glass title -->
<div class="a" style="left:676px;top:7px;width:640px;height:28px;border-radius:6px 6px 0 0;overflow:hidden;background:linear-gradient(#a2b0c6,#98a8c0 50%,#7a8aa8)">
<div class="a" style="left:-10px;top:2px;width:220px;height:18px;background:#a6b2c6;filter:blur(4px)"></div>
<div class="a" style="left:80px;top:0px;width:80px;height:10px;background:#8a9cbc;filter:blur(4px)"></div>
<div class="a" style="left:226px;top:2px;width:138px;height:17px;background:#b4c8e6;filter:blur(3px)"></div>
<div class="a" style="left:366px;top:2px;width:140px;height:18px;background:#7a8cac;filter:blur(3px)"></div>
<div class="a" style="left:376px;top:4px;width:12px;height:8px;background:#5a6a8a;filter:blur(2px)"></div>
<div class="a" style="left:426px;top:3px;width:14px;height:10px;background:#5e6e8c;filter:blur(2px)"></div>
<div class="a" style="left:460px;top:4px;width:14px;height:12px;background:#8ea6d0;filter:blur(3px)"></div>
<div class="a" style="left:510px;top:2px;width:74px;height:18px;background:#4472c0;filter:blur(3px)"></div>
<div class="a" style="left:584px;top:3px;width:40px;height:12px;background:#a8687c;filter:blur(4px)"></div>
<div class="a" style="left:0;top:17px;width:640px;height:11px;background:linear-gradient(rgba(116,132,164,0),rgba(116,132,164,0.95) 60%)"></div>
</div>
<div class="a" style="left:678px;top:7px;width:626px;height:1px;background:rgba(235,242,255,0.7)"></div>
<div class="a" style="left:676px;top:33px;width:640px;height:2px;background:#b7c3d6"></div>
<svg class="a" style="left:682px;top:13px" width="16" height="16">
<defs><linearGradient id="ig" x1="0" y1="0" x2="1" y2="1"><stop offset="0" stop-color="#1a8a88"/><stop offset="1" stop-color="#9ee0d8"/></linearGradient></defs>
<rect width="16" height="16" fill="url(#ig)"/>
<polygon points="3,3 10,3 13,8 10,13 3,13 6,10.5 4,8 6,5.5" fill="#0e4e50"/>
</svg>
<div class="t" style="left:703px;top:14px;font-size:12.4px;color:#0a0a10"><span class="c">透</span><span class="c">视</span>, <span class="c">帧</span> 0, RGBA <span class="c">颜</span><span class="c">色</span> 16 <span class="c">位</span>/<span class="c">通</span><span class="c">道</span> (1:1)</div>
<!-- left frame highlight -->
<div class="a" style="left:680px;top:35px;width:1px;height:718px;background:#a8b8cc"></div>
<div class="a" style="left:680px;top:752px;width:625px;height:1px;background:#a8b8cc"></div>
<!-- panel -->
<div class="a" style="left:681px;top:35px;width:623px;height:717px;background:#464646"></div>
<div class="a" style="left:1304px;top:35px;width:1px;height:717px;background:#111"></div>
<div class="a" style="left:1305px;top:6px;width:1px;height:753px;background:#c8d4e4"></div>
<div class="a" style="left:681px;top:100px;width:623px;height:1px;background:#161616"></div>
<div class="a" style="left:681px;top:130px;width:623px;height:2px;background:#0c0c0c"></div>
<div class="a" style="left:682px;top:132px;width:622px;height:620px;background:#858585"></div>
<div class="a" style="left:691px;top:141px;width:613px;height:602px;background:#000"></div>
<div class="a" style="left:682px;top:751px;width:622px;height:1px;background:#2a2a2a"></div>
<!-- frame glints -->
<div class="a" style="left:700px;top:752px;width:50px;height:7px;background:radial-gradient(ellipse at center,rgba(220,235,255,0.75),rgba(220,235,255,0) 70%)"></div>
<div class="a" style="left:800px;top:752px;width:60px;height:7px;background:radial-gradient(ellipse at center,rgba(200,220,250,0.45),rgba(200,220,250,0) 70%)"></div>
<div class="a" style="left:915px;top:752px;width:60px;height:7px;background:radial-gradient(ellipse at center,rgba(210,225,250,0.6),rgba(210,225,250,0) 70%)"></div>
<div class="a" style="left:1060px;top:752px;width:70px;height:7px;background:radial-gradient(ellipse at center,rgba(210,225,250,0.55),rgba(210,225,250,0) 70%)"></div>
<div class="a" style="left:1220px;top:752px;width:60px;height:7px;background:radial-gradient(ellipse at center,rgba(210,225,250,0.5),rgba(210,225,250,0) 70%)"></div>
<div class="a" style="left:675px;top:170px;width:6px;height:60px;background:radial-gradient(ellipse at center,rgba(200,220,250,0.35),rgba(200,220,250,0) 70%)"></div>
<!-- labels -->
<div class="t" style="left:687px;top:54px;font-size:12px;color:#d2d2d2"><span class="c">要</span><span class="c">渲</span><span class="c">染</span><span class="c">的</span><span class="c">区</span><span class="c">域</span>:</div>
<div class="t" style="left:862px;top:54px;font-size:12px;color:#d2d2d2"><span class="c">视</span><span class="c">口</span>:</div>
<div class="t" style="left:1013px;top:54px;font-size:12px;color:#d2d2d2"><span class="c">渲</span><span class="c">染</span><span class="c">预</span><span class="c">设</span>:</div>
<!-- dropdowns row 1 -->
<div class="a" style="left:687px;top:71px;width:80px;height:20px;border:2px solid #111;background:linear-gradient(#fbfbfb,#d0d0d0)"></div>
<div class="t" style="left:690px;top:75px;font-size:13px;color:#111"><span class="c">视</span><span class="c">图</span></div>
<svg class="a" style="left:755px;top:78px" width="10" height="6"><polygon points="1,0.5 9,0.5 5,5" fill="#111"/></svg>
<div class="a" style="left:771px;top:71px;width:20px;height:20px;border-right:2px solid #111;border-bottom:2px solid #111;background:#474747"></div>
<svg class="a" style="left:765px;top:65px" width="55" height="30" viewBox="765 65 55 30">
<g stroke="#f4f4f4" stroke-width="1.4" fill="none"><line x1="774.5" y1="74.5" x2="774.5" y2="87.5"/><line x1="774.5" y1="75.5" x2="779.5" y2="75.5"/><line x1="774.5" y1="86.5" x2="786.5" y2="86.5"/></g>
<g fill="#f4f4f4"><polygon points="774.5,73.5 776,75.5 774.5,77.5 773,75.5"/><polygon points="786.5,85 788,86.5 786.5,88 785,86.5"/><polygon points="774.5,85 776,86.5 774.5,88 773,86.5"/></g>
<path d="M778,79 q1,-1 2.5,1 l1,1 v-5.5 q0,-1.2 1,-1.2 q1,0 1,1.2 v-1 q0,-1.2 1,-1.2 q1,0 1,1.2 v1.2 q0,-1 1,-1 q1,0 1,1.2 v2 q0,-0.8 0.8,-0.8 q0.8,0 0.8,1 v4 q0,3 -3,4 h-3 q-2,-0.5 -3,-2.5 z" fill="#f2f2f2" stroke="#888" stroke-width="0.4"/>
<rect x="794" y="71" width="19" height="20" fill="#474747"/><line x1="813" y1="71" x2="813" y2="91" stroke="#111" stroke-width="2"/><line x1="794" y1="90.5" x2="813" y2="90.5" stroke="#111" stroke-width="1.5"/>
<g stroke="#f4f4f4" stroke-width="1.4" fill="none"><rect x="796.5" y="75.5" width="12" height="11"/></g>
<g fill="#f4f4f4"><polygon points="796.5,73.5 798,75.5 796.5,77.5 795,75.5"/><polygon points="808.5,73.5 810,75.5 808.5,77.5 807,75.5"/><polygon points="796.5,84.5 798,86.5 796.5,88.5 795,86.5"/><polygon points="808.5,84.5 810,86.5 808.5,88.5 807,86.5"/></g>
<rect x="798.5" y="77.5" width="8.5" height="7.5" fill="#000"/>
<rect x="799.5" y="80" width="5" height="4" fill="#fff"/>
<polyline points="801,78.6 806,78.6 806,83" fill="none" stroke="#f8f000" stroke-width="1.2"/>
</svg>
<div class="a" style="left:862px;top:71px;width:107px;height:20px;border:2px solid #111;background:linear-gradient(#fbfbfb,#d0d0d0);overflow:hidden"><div class="t" style="left:3px;top:2px;font-size:13px;color:#111"><span class="c">四</span><span class="c">元</span><span class="c">菜</span><span class="c">单</span> <span style="color:#1a2a80">4</span> - <span class="c">透</span><span class="c">视</span></div><div class="a" style="right:0;top:0;width:20px;height:18px;background:linear-gradient(#f4f4f4,#d4d4d4)"></div></div>
<svg class="a" style="left:955px;top:78px" width="10" height="6"><polygon points="1,0.5 9,0.5 5,5" fill="#111"/></svg>
<div class="a" style="left:980px;top:71px;width:20px;height:20px;border:1px solid #222;background:#4a4a4a"></div>
<svg class="a" style="left:980px;top:71px" width="20" height="20"><path d="M6.5,10 v-3 a3.5,3.5 0 0 1 7,0 v3" fill="none" stroke="#e8dcc0" stroke-width="1.5"/><rect x="5" y="10" width="10" height="7" fill="#e8d4a8"/><rect x="9.5" y="12" width="1.2" height="3" fill="#6a5a3a"/></svg>
<div class="a" style="left:1013px;top:71px;width:107px;height:20px;border:2px solid #111;background:linear-gradient(#fbfbfb,#d0d0d0)"></div>
<div class="a" style="left:1018px;top:81px;width:82px;height:0;border-top:1px dashed #2a3a70"></div>
<svg class="a" style="left:1105px;top:78px" width="10" height="6"><polygon points="1,0.5 9,0.5 5,5" fill="#111"/></svg>
<div class="a" style="left:1134px;top:71px;width:20px;height:20px;border:1px solid #222;background:#4a4a4a"></div>
<svg class="a" style="left:1134px;top:71px" width="20" height="20"><rect x="2" y="3" width="12" height="10" fill="#e4e4e4" stroke="#888" stroke-width="0.6"/><rect x="2" y="3" width="12" height="3" fill="#b8b8b8"/><ellipse cx="13" cy="14" rx="4.5" ry="3" fill="#ddd" stroke="#2a3a50" stroke-width="1"/></svg>
<div class="a" style="left:1157px;top:71px;width:19px;height:20px;border:1px solid #222;background:#4a4a4a"></div>
<svg class="a" style="left:1157px;top:71px" width="19" height="20"><circle cx="9.5" cy="10" r="6.5" fill="#e8e8e8" stroke="#aaa" stroke-width="0.8"/><circle cx="9.5" cy="10" r="2.4" fill="#333"/></svg>
<!-- row 2 -->
<svg class="a" style="left:682px;top:101px" width="120" height="29" viewBox="682 101 120 29">
<rect x="686" y="109.3" width="13.8" height="13.4" fill="#0a0a0a"/>
<rect x="688.6" y="110.2" width="8.6" height="6" fill="#f8f400"/>
<rect x="687" y="110" width="1.2" height="12" fill="#e8e8e8"/><rect x="698.4" y="110" width="1.2" height="12" fill="#e8e8e8"/>
<rect x="695.6" y="118.8" width="1.6" height="2.6" fill="#bbb"/>
<path d="M707.2,109.6 h4.6 l1.6,1.6 v7.4 h-6.2z" fill="#fff" stroke="#111" stroke-width="0.9"/>
<line x1="708.5" y1="112" x2="711" y2="112" stroke="#111" stroke-width="0.8"/><line x1="708.5" y1="114.5" x2="711" y2="114.5" stroke="#111" stroke-width="0.8"/>
<path d="M713.2,111.4 h5.6 l2.8,2.8 v7.6 h-8.4z" fill="#fff" stroke="#1a1ad8" stroke-width="1" stroke-dasharray="1,0.6"/>
<line x1="715" y1="115.5" x2="720" y2="115.5" stroke="#111" stroke-width="0.8"/><line x1="715" y1="118" x2="720" y2="118" stroke="#111" stroke-width="0.8"/><line x1="715" y1="120.2" x2="720" y2="120.2" stroke="#111" stroke-width="0.8"/>
<g fill="#f4f4f4" stroke="#111" stroke-width="0.7">
<circle cx="733" cy="111.8" r="1.8"/><path d="M729.5,114 h7 l0.8,3 h-1.5 v5 h-1.5 v-2.5 h-1.6 v2.5 h-1.5 v-5 h-1.5z"/>
<circle cx="740.8" cy="111.8" r="1.8"/><path d="M737.3,114 h7 l0.8,3 h-1.5 v5 h-1.5 v-2.5 h-1.6 v2.5 h-1.5 v-5 h-1.5z"/>
</g>
<path d="M754.5,108.5 h8.5 l-2,5 h-8.5z" fill="#f4f4f4" stroke="#111" stroke-width="0.8"/>
<path d="M752,113 h13 l1.5,2 v5.5 l-1.5,1 h-13 l-1,-1 v-5.5z" fill="#f4f4f4" stroke="#111" stroke-width="0.9"/>
<line x1="752" y1="116.8" x2="766" y2="116.8" stroke="#333" stroke-width="0.9"/><rect x="757.5" y="117.6" width="3.2" height="1.2" fill="#e8d000"/>
<path d="M774.5,111 l1.2,-1 l12,11.5 l-0.5,1 z M787,110.5 l-12,11.8 l-1,-0.6 l12,-11.8 z" fill="#0a0a0a" stroke="#0a0a0a" stroke-width="1"/>
</svg>
<div class="a" style="left:864px;top:105px;width:21px;height:21px;background:#fff;border:1px solid #222"></div>
<div class="a" style="left:869px;top:110px;width:11px;height:11px;border-radius:50%;background:#ff0000"></div>
<div class="a" style="left:886px;top:105px;width:21px;height:21px;background:#fff;border:1px solid #222"></div>
<div class="a" style="left:891px;top:110px;width:11px;height:11px;border-radius:50%;background:#008000"></div>
<div class="a" style="left:908px;top:105px;width:21px;height:21px;background:#fff;border:1px solid #222"></div>
<div class="a" style="left:913px;top:110px;width:11px;height:11px;border-radius:50%;background:#0000ff"></div>
<svg class="a" style="left:932px;top:108px" width="40" height="16"><circle cx="8.5" cy="8" r="4" fill="#f0f0f0" stroke="#000" stroke-width="1.2"/><path d="M8.5,4 a4,4 0 0 0 0,8z" fill="#000"/><rect x="26" y="4" width="9" height="9" rx="2" fill="#8a8a8a"/></svg>
<div class="a" style="left:980px;top:104px;width:22px;height:22px;background:#fff;border:1px solid #222"></div>
<div class="a" style="left:1014px;top:106px;width:107px;height:20px;border:2px solid #111;background:linear-gradient(#fbfbfb,#d0d0d0)"></div>
<div class="t" style="left:1017px;top:110px;font-size:12px;color:#1a1a60">RGB Alpha</div>
<svg class="a" style="left:1106px;top:113px" width="10" height="6"><polygon points="1,0.5 9,0.5 5,5" fill="#111"/></svg>
<div class="a" style="left:1134px;top:105px;width:20px;height:21px;background:#fff;border:1px solid #222"></div>
<svg class="a" style="left:1134px;top:105px" width="20" height="21"><rect x="3" y="3" width="14" height="15" fill="#707070"/><rect x="5" y="6" width="10" height="1.5" fill="#fff"/><rect x="5.5" y="9.5" width="9" height="6" fill="none" stroke="#fff" stroke-width="1.2"/></svg>
<div class="a" style="left:1157px;top:105px;width:20px;height:21px;background:#fff;border:1px solid #222"></div>
<svg class="a" style="left:1157px;top:105px" width="20" height="21"><rect x="3" y="3" width="14" height="15" fill="#111"/><rect x="3" y="5" width="14" height="2" fill="#aaa"/><rect x="3" y="15" width="14" height="1.5" fill="#aaa"/></svg>

<!-- render image scene -->
<svg class="a" style="left:0;top:0" width="1306" height="767" viewBox="0 0 1306 767">
<defs>
<clipPath id="rc"><rect x="691" y="141" width="613" height="602"/></clipPath>
<clipPath id="topf"><polygon points="660,538 1010.3,387.3 1154,475.3 814,670"/></clipPath>
<clipPath id="frontf"><polygon points="814,670 1154,475.3 1154,505 819.6,699.5"/></clipPath>
<filter id="bl" x="-20%" y="-20%" width="140%" height="140%"><feGaussianBlur stdDeviation="1.8"/></filter>
<filter id="bl3" x="-20%" y="-20%" width="140%" height="140%"><feGaussianBlur stdDeviation="2"/></filter>
<filter id="bl2" x="-20%" y="-20%" width="140%" height="140%"><feGaussianBlur stdDeviation="1.6"/></filter>
<radialGradient id="rsph2" cx="984" cy="453" r="50" gradientUnits="userSpaceOnUse"><stop offset="0" stop-color="#d2ffff"/><stop offset="0.2" stop-color="#b0e6ee"/><stop offset="0.5" stop-color="#7fb4c0"/><stop offset="0.75" stop-color="#4f7884"/><stop offset="0.92" stop-color="#2a4048"/><stop offset="1" stop-color="#1a2628"/></radialGradient>
<linearGradient id="lit" x1="880" y1="410" x2="1110" y2="520" gradientUnits="userSpaceOnUse">
<stop offset="0" stop-color="#5b838c"/><stop offset="0.5" stop-color="#71a2ad"/><stop offset="1" stop-color="#90c6d2"/>
</linearGradient>
<radialGradient id="rsph" cx="986" cy="452" r="78" gradientUnits="userSpaceOnUse">
<stop offset="0" stop-color="#d8ffff"/><stop offset="0.18" stop-color="#a8dde6"/><stop offset="0.42" stop-color="#6a9ca8"/><stop offset="0.58" stop-color="#34505a"/><stop offset="0.72" stop-color="#151e21"/><stop offset="1" stop-color="#121a1c"/>
</radialGradient>
</defs>
<g clip-path="url(#rc)">
<polygon fill="#131a1c" points="660,538 1010.3,387.3 1154,475.3 1154,505 819.6,699.5 699,559 692,526"/>
<g clip-path="url(#topf)"><ellipse cx="952.9" cy="445.2" rx="172" ry="76.5" transform="rotate(15.8 952.9 445.2)" fill="url(#lit)" filter="url(#bl)"/></g>
<g clip-path="url(#frontf)"><path d="M1050,522 L1125,478 L1116,500 Q1108,519 1094,529 Q1078,537 1064,535 Q1056,533 1052,531 Z" fill="#6a96a0" filter="url(#bl3)"/></g>
<clipPath id="rsc"><circle cx="964" cy="461" r="40"/></clipPath>
<circle cx="963.5" cy="461" r="39.6" fill="#121a1c"/>
<g clip-path="url(#rsc)"><ellipse cx="977" cy="459" rx="39" ry="45" fill="url(#rsph2)" filter="url(#bl2)"/></g>
</g>
<!-- red arrow -->
<rect x="638" y="583.8" width="114" height="6" fill="#ff0000"/>
<path d="M788.5,586.8 C772,580 752,574 741.3,568 C748,576 751,582 750,586.8 C751,592 748,598 741.3,605.8 C752,600 772,594 788.5,586.8 Z" fill="#ff0000"/>
</svg>

</body></html>
